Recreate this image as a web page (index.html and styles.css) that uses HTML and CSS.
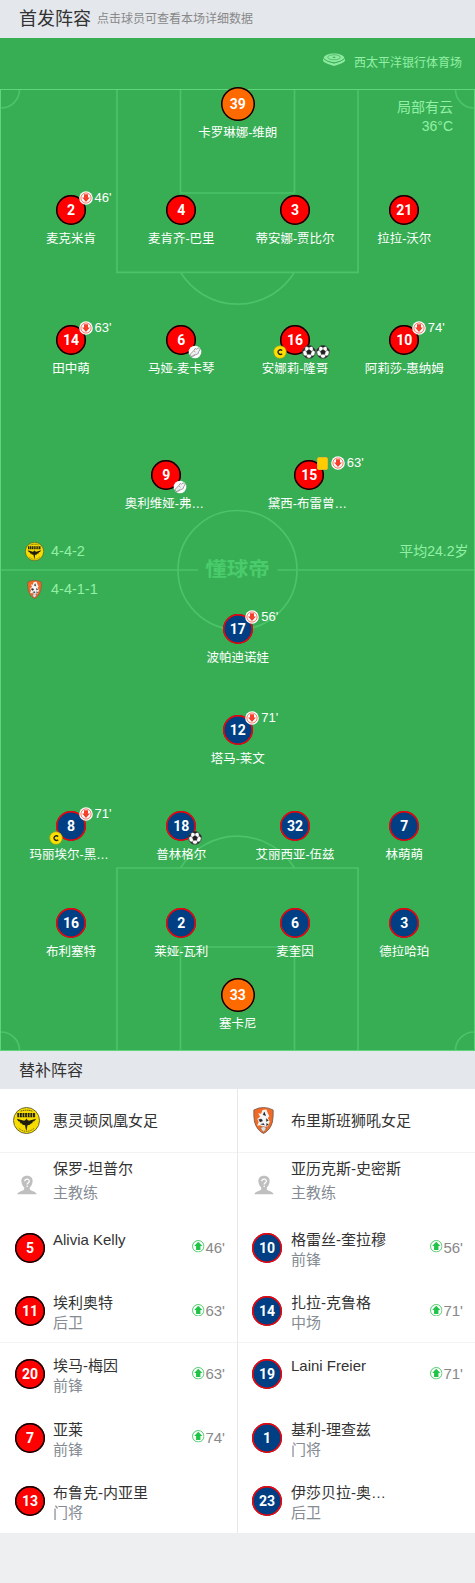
FILE: index.html
```html
<!DOCTYPE html>
<html lang="zh-CN">
<head>
  <meta charset="UTF-8">
  <meta name="viewport" content="width=device-width, initial-scale=1.0">
  <title>首发阵容</title>
  <link rel="stylesheet" href="styles.css">
</head>
<body>
  <!-- 图标 -->
  <svg class="sprite" width="0" height="0">
    <symbol id="down" viewBox="0 0 14 14">
      <circle cx="7" cy="7" r="6.8" fill="#fff"/>
      <circle cx="7" cy="7" r="5.1" fill="none" stroke="#f5513a" stroke-width=".8"/>
      <path d="M5 3.2h4v3.300h1.900L7 11 3.100 6.500H5z" fill="#f5402c"/>
    </symbol>
    <symbol id="up" viewBox="0 0 12 12">
      <circle cx="6" cy="6" r="5.5" fill="#fff" stroke="#2cc04f" stroke-width=".8"/>
      <path d="M6 1.700l3.900 4.100H8.100v3.700H3.900V5.800H2.100z" fill="#20c447"/>
    </symbol>
    <symbol id="ball" viewBox="0 0 14 14">
      <circle cx="7" cy="7" r="6.3" fill="#fff" stroke="#333" stroke-width=".8"/>
      <path d="M7 4.4l2.6 1.9-1 3H5.4l-1-3zM4.6 1.3L7 2.6l2.4-1.3C8 .5 6 .5 4.6 1.3zM.8 6.2l1.9-.9.4-2.500C1.600 3.700.8 5 .8 6.200zM13.200 6.200l-1.900-.9-.4-2.500c1.500.9 2.300 2.200 2.300 3.400zM2.200 10.800l2.200.2 1 1.900c-1.500-.4-2.500-1.100-3.200-2.100zM11.800 10.800l-2.200.2-1 1.900c1.500-.4 2.500-1.100 3.200-2.100z" fill="#222" stroke="#222" stroke-width=".4"/>
      <path d="M7 4.400V2.600M9.600 6.300l1.700-1M8.600 9.300l1 1.700M5.400 9.300l-1 1.700M4.400 6.300l-1.700-1" stroke="#555" stroke-width=".6"/>
    </symbol>
    <symbol id="boot" viewBox="0 0 14 14">
      <circle cx="7" cy="7" r="6.300" fill="#fff"/>
      <path d="M2.300 9.200l3.200-3.300 1.800-2.500 1.100.8 2-1.500 1.700 2.100-1.500 1.900-.4 1.900-2.900 1.300-2.900 1.800-1.600-.3z" fill="#f1f1f1" stroke="#888" stroke-width=".8"/>
      <path d="M6 6l1.500 1.200M3.600 11.300l3.600-2" stroke="#888" stroke-width=".6"/>
    </symbol>
    <symbol id="cap" viewBox="0 0 14 14">
      <circle cx="7" cy="7" r="6.300" fill="#ffe000" stroke="#a8a010" stroke-width=".6"/>
      <path d="M9.200 5.500A2.500 2.200 0 1 0 9.200 8.700" fill="none" stroke="#222" stroke-width="1.400"/>
    </symbol>
    <symbol id="phoenix" viewBox="0 0 28 28">
      <circle cx="14" cy="14" r="13.500" fill="#f7dc00" stroke="#555130" stroke-width=".9"/>
      <path d="M8 4.300Q14 2.300 20 4.300" fill="none" stroke="#3a3714" stroke-width="1" stroke-dasharray="1.500 .7"/>
      <path d="M4.500 8.300h19" stroke="#1d1b0a" stroke-width="4.400" stroke-dasharray="2 .7"/>
      <path d="M6 8.500h16" stroke="#f7dc00" stroke-width=".8" stroke-dasharray=".8 1.900"/>
      <path d="M4 12.300l7.500 2 1.500-.8 1-1.500 1 1.500 1.500.8 7.500-2-2 2.400-1.500.4-.6 1.800-1.500.1-.9 1.500-2.500.3-.7 4L14 25l-.8-2.200-.7-4-2.500-.3-.9-1.500-1.500-.1-.6-1.800-1.500-.4z" fill="#211e0b"/>
      <path d="M6 22q8 6.500 16 0" fill="none" stroke="#59530f" stroke-width=".9" stroke-dasharray="1.200 .8"/>
    </symbol>
    <symbol id="roar" viewBox="0 0 22 28">
      <path d="M11 .5q5 0 10 2.600.4 6-.7 12.400Q18 24 11 27.500 4 24 1.700 15.500.6 9 1 3.100 6 .5 11 .5z" fill="#f06a26" stroke="#68534a" stroke-width=".8"/>
      <path d="M10 3l4-.5 1.500 4 1.500 3-1.500 2 2 3.500-2 5-4 1-4-2-3 .5 1.500-4-1.500-3 3-2.500-2-3.500 3 .5z" fill="#f5f5f5"/>
      <path d="M12 5l-1.500 3 3 1M6 13l3-.5 1 2-2.500 1zM14 12l2 2-2 1zM8 18l3-1 1 2M14 17l2 1-2 2" fill="#292929" stroke="#292929" stroke-width=".4"/>
      <path d="M8 21.300l3-1 3 1-.7 2.500-2.300 2-2.300-2z" fill="#ddd" stroke="#8c4a2d" stroke-width=".6"/>
    </symbol>
    <symbol id="coach" viewBox="0 0 20 20">
      <path d="M10 .8c4 0 6 2.600 5.600 6-.3 2.700-1.500 4.500-2.800 5.700v1.700c0 1.600 6.400 2 6.900 5.100H.3c.5-3.100 6.900-3.500 6.900-5.100v-1.700C5.900 11.300 4.700 9.500 4.400 6.800 4 3.400 6 .8 10 .8z" fill="#bfbfbf"/>
      <path d="M7.800 6.200c.1-2.800 4.600-2.800 4.500 0 0 1.600-2.100 1.700-2.100 3.400" fill="none" stroke="#fff" stroke-width="1.300"/>
      <circle cx="10.200" cy="11.200" r=".8" fill="#fff"/>
    </symbol>
    <symbol id="stadium" viewBox="0 0 22 13">
      <path d="M0 5.200v2.600Q1 10 11 13q10-3 11-5.200V5.200Q20 8 11 10.400 2 8 0 5.200z" fill="#8eeaa1"/>
      <path d="M11 .5c5 0 10.300 2 10.300 4.300S15 9.300 11 9.300.7 7 .7 4.800 6 .5 11 .5z" fill="#8eeaa1"/>
      <ellipse cx="11" cy="4.300" rx="6.300" ry="2.500" fill="none" stroke="#37ae54" stroke-width=".7"/>
      <path d="M9 4.300l2-.8 2 .8-2 .8z" fill="#37ae54"/>
      <path d="M.3 5.500Q3 8.300 11 10 19 8.300 21.700 5.500" fill="none" stroke="#37ae54" stroke-width=".8"/>
    </symbol>
  </svg>

  <div class="title">
    <h2>首发阵容</h2>
    <span>点击球员可查看本场详细数据</span>
  </div>

  <div class="pitch">
    <!-- 球场线 -->
    <svg class="lines" viewBox="0 38 475 1013">
      <g fill="none" stroke="#4bc368" stroke-width="1.7">
        <path d="M117 90V272.300H358V90M180.500 90V193H294.500V90"/>
        <path d="M180.500 272.300A67 67 0 0 0 294.500 272.300"/>
        <path d="M117 1050V868H358V1050M180.500 1050V947H294.500V1050"/>
        <path d="M180.500 868A67 67 0 0 1 294.500 868"/>
        <circle cx="237.500" cy="570" r="59.500"/>
        <path d="M1 570H198M277.500 570H474"/>
        <path d="M1 108A18.500 18.500 0 0 0 19.500 89.500M474 108A18.500 18.500 0 0 1 455.500 89.500"/>
        <path d="M1 1032A18.500 18.500 0 0 1 19.500 1050.500M474 1032A18.500 18.500 0 0 0 455.500 1050.500"/>
      </g>
      <rect x=".5" y="89.500" width="474" height="961" fill="none" stroke="#5dd67b"/>
    </svg>
    <div class="logo">懂球帝</div>
    <div class="stadium"><svg><use href="#stadium"/></svg>西太平洋银行体育场</div>
    <div class="weather">局部有云<br>36°C</div>
    <div class="formation home"><svg><use href="#phoenix"/></svg>4-4-2</div>
    <div class="formation away"><svg><use href="#roar"/></svg>4-4-1-1</div>
    <div class="age">平均24.2岁</div>

    <!-- 主队 -->
    <div class="row one">
      <div class="player keeper"><div class="spot"><b>39</b></div><p>卡罗琳娜-维朗</p></div>
    </div>
    <div class="row four">
      <div class="player"><div class="spot"><b>2</b><div class="off"><svg><use href="#down"/></svg>46'</div></div><p>麦克米肯</p></div>
      <div class="player"><div class="spot"><b>4</b></div><p>麦肯齐-巴里</p></div>
      <div class="player"><div class="spot"><b>3</b></div><p>蒂安娜-贾比尔</p></div>
      <div class="player"><div class="spot"><b>21</b></div><p>拉拉-沃尔</p></div>
    </div>
    <div class="row four">
      <div class="player"><div class="spot"><b>14</b><div class="off"><svg><use href="#down"/></svg>63'</div></div><p>田中萌</p></div>
      <div class="player"><div class="spot"><b>6</b><div class="event"><svg><use href="#boot"/></svg></div></div><p>马娅-麦卡琴</p></div>
      <div class="player"><div class="spot"><b>16</b><div class="captain"><svg><use href="#cap"/></svg></div><div class="event"><svg><use href="#ball"/></svg><svg><use href="#ball"/></svg></div></div><p>安娜莉-隆哥</p></div>
      <div class="player"><div class="spot"><b>10</b><div class="off"><svg><use href="#down"/></svg>74'</div></div><p>阿莉莎-惠纳姆</p></div>
    </div>
    <div class="row two">
      <div class="player"><div class="spot"><b>9</b><div class="event"><svg><use href="#boot"/></svg></div></div><p class="cut">奥利维娅-弗…</p></div>
      <div class="player"><div class="spot"><b>15</b><div class="off"><i class="card"></i><svg><use href="#down"/></svg>63'</div></div><p class="cut">黛西-布雷曾…</p></div>
    </div>

    <!-- 客队 -->
    <div class="row one guest">
      <div class="player"><div class="spot"><b>17</b><div class="off"><svg><use href="#down"/></svg>56'</div></div><p>波帕迪诺娃</p></div>
    </div>
    <div class="row one guest">
      <div class="player"><div class="spot"><b>12</b><div class="off"><svg><use href="#down"/></svg>71'</div></div><p>塔马-莱文</p></div>
    </div>
    <div class="row four guest">
      <div class="player"><div class="spot"><b>8</b><div class="off"><svg><use href="#down"/></svg>71'</div><div class="captain"><svg><use href="#cap"/></svg></div></div><p class="cut">玛丽埃尔-黑…</p></div>
      <div class="player"><div class="spot"><b>18</b><div class="event"><svg><use href="#ball"/></svg></div></div><p>普林格尔</p></div>
      <div class="player"><div class="spot"><b>32</b></div><p>艾丽西亚-伍兹</p></div>
      <div class="player"><div class="spot"><b>7</b></div><p>林萌萌</p></div>
    </div>
    <div class="row four guest">
      <div class="player"><div class="spot"><b>16</b></div><p>布利塞特</p></div>
      <div class="player"><div class="spot"><b>2</b></div><p>莱娅-瓦利</p></div>
      <div class="player"><div class="spot"><b>6</b></div><p>麦奎因</p></div>
      <div class="player"><div class="spot"><b>3</b></div><p>德拉哈珀</p></div>
    </div>
    <div class="row one">
      <div class="player keeper"><div class="spot"><b>33</b></div><p>塞卡尼</p></div>
    </div>
  </div>

  <div class="title small"><h2>替补阵容</h2></div>

  <div class="bench">
    <div class="team">
      <div class="item club"><svg><use href="#phoenix"/></svg><p>惠灵顿凤凰女足</p></div>
      <div class="item coach"><svg><use href="#coach"/></svg><div class="info"><p>保罗-坦普尔</p><span>主教练</span></div></div>
      <div class="item"><b>5</b><div class="info"><p>Alivia Kelly</p></div><div class="on"><svg><use href="#up"/></svg>46'</div></div>
      <div class="item"><b>11</b><div class="info"><p>埃利奥特</p><span>后卫</span></div><div class="on"><svg><use href="#up"/></svg>63'</div></div>
      <div class="item line"><b>20</b><div class="info"><p>埃马-梅因</p><span>前锋</span></div><div class="on"><svg><use href="#up"/></svg>63'</div></div>
      <div class="item"><b>7</b><div class="info"><p>亚莱</p><span>前锋</span></div><div class="on"><svg><use href="#up"/></svg>74'</div></div>
      <div class="item"><b>13</b><div class="info"><p>布鲁克-内亚里</p><span>门将</span></div></div>
    </div>
    <div class="team guest">
      <div class="item club"><svg><use href="#roar"/></svg><p>布里斯班狮吼女足</p></div>
      <div class="item coach"><svg><use href="#coach"/></svg><div class="info"><p>亚历克斯-史密斯</p><span>主教练</span></div></div>
      <div class="item"><b>10</b><div class="info"><p>格雷丝-奎拉穆</p><span>前锋</span></div><div class="on"><svg><use href="#up"/></svg>56'</div></div>
      <div class="item"><b>14</b><div class="info"><p>扎拉-克鲁格</p><span>中场</span></div><div class="on"><svg><use href="#up"/></svg>71'</div></div>
      <div class="item line"><b>19</b><div class="info"><p>Laini Freier</p></div><div class="on"><svg><use href="#up"/></svg>71'</div></div>
      <div class="item"><b>1</b><div class="info"><p>基利-理查兹</p><span>门将</span></div></div>
      <div class="item"><b>23</b><div class="info"><p>伊莎贝拉-奥…</p><span>后卫</span></div></div>
    </div>
  </div>
</body>
</html>
```
FILE: styles.css
```css
* {
  box-sizing: border-box;
  margin: 0;
  padding: 0;
}
body {
  min-height: 1583px;
  background: #eeeff1;
  font-family: "Liberation Sans", "Noto Sans CJK SC", sans-serif;
  color: #333;
}
.sprite {
  display: block;
}

/* 标题栏 */
.title {
  display: flex;
  align-items: center;
  height: 38px;
  padding-left: 19px;
  background: #e4e7ec;
}
.title h2 {
  font-size: 18px;
  font-weight: normal;
  line-height: 38px;
}
.title span {
  margin-left: 6px;
  font-size: 12px;
  line-height: 16px;
  color: #888;
}
.title.small h2 {
  padding-top: 1px;
  font-size: 16px;
}

/* 球场 */
.pitch {
  position: relative;
  display: grid;
  grid-template-rows: 106px 130px 135px 154px 101px 96px 97px 72px 54px;
  height: 1013px;
  padding-top: 49px;
  background: #37ae54;
  color: #fff;
}
.lines {
  position: absolute;
  top: 0;
  left: 0;
  width: 475px;
  height: 1013px;
}
.logo {
  position: absolute;
  top: 517px;
  left: 0;
  width: 475px;
  text-align: center;
  font-size: 21.500px;
  line-height: 30px;
  font-weight: bold;
  color: #4bcc6c;
  transform: scaleY(.92);
}
.stadium,
.weather,
.formation,
.age {
  position: absolute;
  color: #93f0a6;
  font-size: 14px;
  line-height: 19px;
}
.stadium {
  top: 16px;
  right: 13px;
  display: flex;
  font-size: 12px;
}
.stadium svg {
  width: 22px;
  height: 13px;
  margin: -1px 9px 0 0;
}
.weather {
  top: 60px;
  right: 22px;
  text-align: right;
}
.formation {
  left: 25px;
  display: flex;
  align-items: center;
  gap: 7px;
  font-size: 14.500px;
}
.formation svg {
  width: 19px;
  height: 19px;
}
.home {
  top: 504px;
}
.away {
  top: 542px;
}
.age {
  top: 504px;
  right: 6.500px;
}

/* 球员 */
.row {
  position: relative;
  display: grid;
  justify-content: center;
}
.one {
  grid-template-columns: 140px;
}
.two {
  grid-template-columns: 143px 143px;
}
.four {
  justify-content: start;
  padding-left: 14.500px;
  grid-template-columns: 112.500px 108px 119.500px 99px;
}
.spot {
  position: relative;
  display: flex;
  align-items: center;
  justify-content: center;
  width: 34px;
  height: 34px;
  margin: 0 auto;
}
.player {
  padding-left: .5px;
}
.player p {
  margin-top: 4px;
  text-align: center;
  font-size: 12.500px;
  line-height: 17px;
  white-space: nowrap;
}
.player .cut {
  width: 83px;
  margin: 4px auto 0;
  text-align: left;
}
.spot b,
.item b {
  width: 30px;
  height: 30px;
  border-radius: 50%;
  background: #f00;
  box-shadow: inset 0 0 0 1.500px #000;
  color: #fff;
  font-family: Roboto, sans-serif;
  font-size: 14px;
  line-height: 30px;
  text-align: center;
}
.keeper b {
  width: 34px;
  height: 34px;
  line-height: 34px;
  background: #ff6a00;
}
.guest b {
  background: #003f83;
  box-shadow: inset 0 0 0 1.500px #f00;
}
.off,
.event,
.captain {
  position: absolute;
  display: flex;
  align-items: center;
}
.off {
  top: -2px;
  left: 24.500px;
  height: 14px;
  font-size: 13px;
  line-height: 14px;
}
.off svg {
  width: 14px;
  height: 14px;
  margin-right: 2px;
}
.card {
  width: 11px;
  height: 13px;
  margin-right: 3px;
  border: 1px solid #e2ba2d;
  border-radius: 2px;
  background: #fc0;
}
.event {
  top: 21.500px;
  left: 24px;
}
.event svg,
.captain svg {
  width: 14px;
  height: 14px;
}
.captain {
  top: 21.500px;
  left: -5px;
}

/* 替补 */
.bench {
  display: flex;
  height: 444px;
  background: #fff;
}
.team {
  width: 238px;
  border-right: 1px solid #e8e8ea;
}
.team.guest {
  width: 237px;
  border: 0;
}
.item {
  display: flex;
  height: 63.330px;
  padding: 0 12px 0 15px;
  font-size: 15px;
  line-height: 20px;
}
.guest .item {
  padding-left: 14px;
}
.item b {
  margin-top: 17px;
}
.info {
  flex: 1;
  margin-left: 8px;
  padding-top: 14px;
}
.guest .info {
  margin-left: 9px;
}
.info span {
  display: block;
  color: #858b93;
}
.club {
  align-items: center;
}
.club svg {
  width: 27px;
  height: 27px;
  margin: 0 13px 0 -2px;
}
.guest .club svg {
  margin-right: 14px;
}
.coach svg {
  width: 20px;
  height: 20px;
  margin: 22px 8.500px 0 1.500px;
}
.coach .info {
  padding-top: 6px;
}
.coach span {
  margin-top: 4px;
}
.coach,
.line {
  border-top: 1px solid #f3f3f3;
}
.line b {
  margin-top: 16px;
}
.line .info {
  padding-top: 13px;
}
.on {
  display: flex;
  align-items: center;
  height: 20px;
  margin-top: 22px;
  color: #888;
}
.line .on {
  margin-top: 21px;
}
.on svg {
  width: 12.500px;
  height: 12.500px;
  margin: -2px .5px 0 0;
}
```
